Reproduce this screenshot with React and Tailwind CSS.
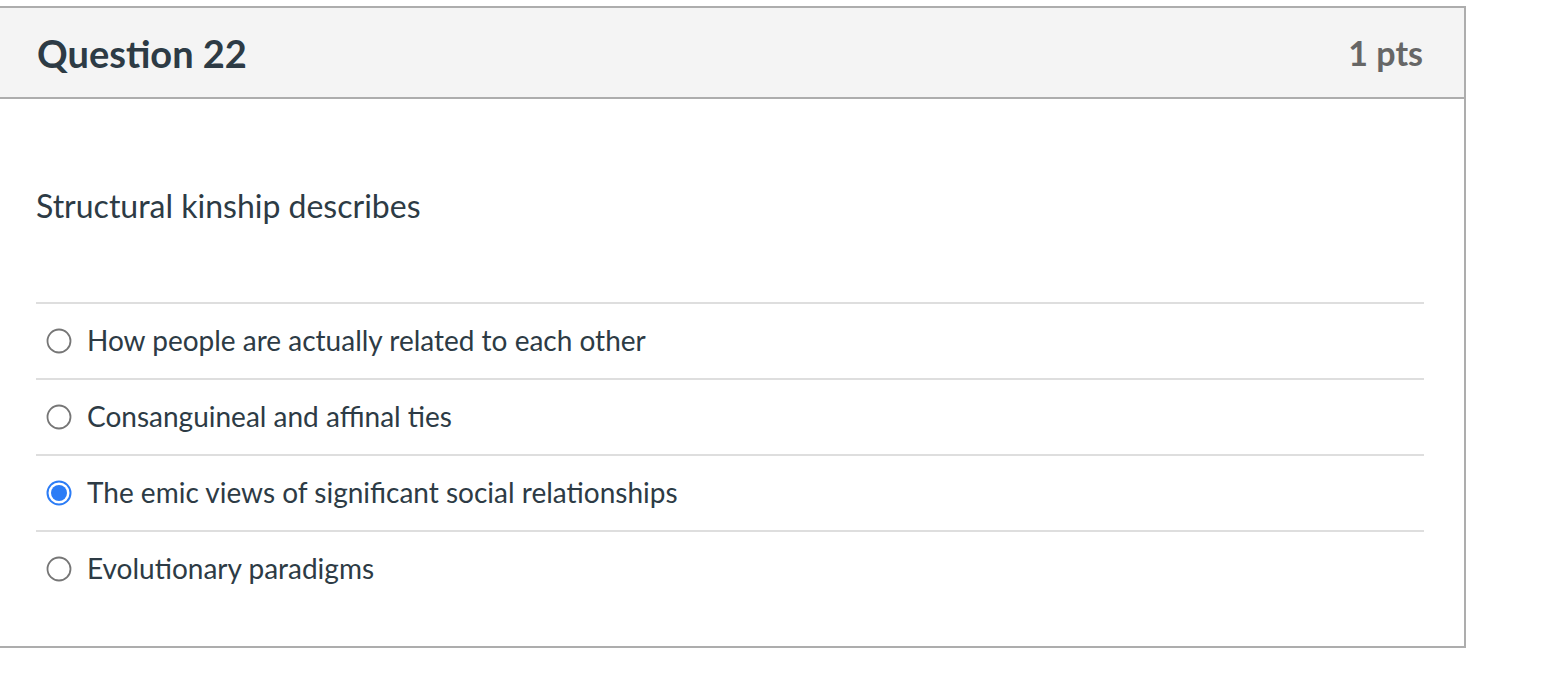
import React, { useState } from "react";

const answers = [
  "How people are actually related to each other",
  "Consanguineal and affinal ties",
  "The emic views of significant social relationships",
  "Evolutionary paradigms",
];

function Radio({ checked }) {
  return checked ? (
    <svg width="26" height="26" viewBox="0 0 26 26" className="shrink-0">
      <circle cx="13" cy="13" r="11.5" fill="#fff" stroke="#2b7cf6" strokeWidth="2" />
      <circle cx="13" cy="13" r="8" fill="#2b7cf6" />
    </svg>
  ) : (
    <svg width="26" height="26" viewBox="0 0 26 26" className="shrink-0">
      <circle cx="13" cy="13" r="11.5" fill="#fff" stroke="#767676" strokeWidth="1.8" />
    </svg>
  );
}

export default function App() {
  const [picked, setPicked] = useState(2);

  return (
    <div className="w-full h-[690px] bg-white pt-[6px]" style={{ fontFamily: "Lato, 'Noto Sans', sans-serif" }}>
      <div className="w-[1466px] border-2 border-l-0 border-[#adadad]">
        {/* header */}
        <div className="flex items-center justify-between h-[91px] px-[37px] bg-[#f4f4f4] border-b-2 border-[#adadad]">
          <h2 className="text-[38px] font-bold text-[#2d3b45] leading-none">Question 22</h2>
          <div className="text-[34px] font-bold text-[#666] leading-none pr-[4px]">1 pts</div>
        </div>

        {/* body */}
        <div className="px-[36px] pb-[40px]">
          <div className="pt-[87px] mb-[76px] text-[32px] leading-[40px] text-[#2d3b45]">
            Structural kinship describes
          </div>
          <div className="mr-[4px]">
            {answers.map((a, i) => (
              <label
                key={i}
                onClick={() => setPicked(i)}
                className="flex items-center h-[76px] border-t-2 border-[#dedede] cursor-pointer"
              >
                <span className="ml-[10px]">
                  <Radio checked={picked === i} />
                </span>
                <span className="ml-[15px] text-[28px] leading-[36px] pb-[3px] text-[#2d3b45]">{a}</span>
              </label>
            ))}
          </div>
        </div>
      </div>
    </div>
  );
}
